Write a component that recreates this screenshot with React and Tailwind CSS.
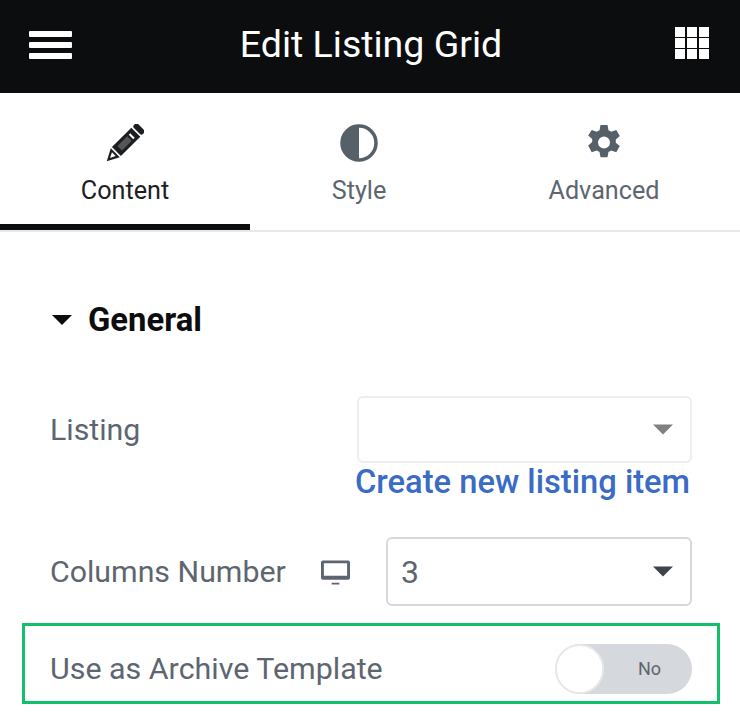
const Caret = ({ className }) => (
  <svg viewBox="0 0 20 10" className={className} fill="currentColor">
    <path d="M0 0h20L10 10z" />
  </svg>
);

const tabs = [
  { label: "Content", width: "w-[250px]", active: true },
  { label: "Style", width: "w-[218px]" },
  { label: "Advanced", width: "w-[272px]" },
];

const TabIcon = ({ name }) => {
  if (name === "Content") {
    return (
      <svg viewBox="0 0 36 36" className="h-[38px] w-[38px] text-[#1c1e21]" fill="currentColor">
        <g transform="rotate(45 18 18)">
          <rect x="12" y="-3.500" width="12" height="5.500" rx="2" />
          <rect x="12" y="3.500" width="12" height="26" />
          <rect x="15" y="8" width="6" height="2" fill="#fff" />
          <rect x="15" y="12" width="6" height="13" fill="#fff" opacity="0.25" />
          <path d="M12 31h12L18 42.500z" />
          <path d="M15.500 33h5L18 38z" fill="#fff" />
        </g>
      </svg>
    );
  }
  if (name === "Style") {
    return (
      <svg viewBox="0 0 38 38" className="h-[38px] w-[38px] text-[#556068]">
        <circle cx="19" cy="19" r="17" fill="none" stroke="currentColor" strokeWidth="3.500" />
        <path d="M19 2a17 17 0 0 0 0 34z" fill="currentColor" />
      </svg>
    );
  }
  return (
    <svg viewBox="0 0 38 38" className="h-[38px] w-[38px] text-[#556068]" fill="currentColor">
      <path
        fillRule="evenodd"
        d="M15.500 1h7l1 5.200 2.800 1.600 5-1.800 3.500 6.100-4 3.400v3.200l4 3.400-3.500 6.100-5-1.800-2.800 1.600-1 5.200h-7l-1-5.200-2.800-1.600-5 1.800L3.200 21.500l4-3.400v-3.200l-4-3.400L6.700 6l5 1.800 2.800-1.600zM19 12.500a6 6 0 1 0 0 12 6 6 0 0 0 0-12z"
      />
    </svg>
  );
};

export default function App() {
  return (
    <div className="h-[718px] w-[740px] overflow-hidden bg-white font-['Roboto',sans-serif] text-[#5d6670]">
      <header className="flex h-[93px] items-center justify-between bg-[#0c0d0e] pb-[3px] pl-[29px] pr-[31px] text-white">
        <div className="flex w-[43px] flex-col gap-[5px]">
          <span className="h-[6px] rounded-[1px] bg-white"></span>
          <span className="h-[6px] rounded-[1px] bg-white"></span>
          <span className="h-[6px] rounded-[1px] bg-white"></span>
        </div>
        <h1 className="mr-[5px] text-[37.500px] font-normal leading-none">Edit Listing Grid</h1>
        <div className="-mt-[5px] grid w-[34px] grid-cols-3 gap-x-[2px] gap-y-[1px]">
          {Array.from({ length: 9 }).map((_, i) => (
            <span key={i} className="h-[10px] bg-white"></span>
          ))}
        </div>
      </header>

      <nav className="flex h-[139px] border-b-2 border-[#e6e8ea]">
        {tabs.map((tab) => (
          <div
            key={tab.label}
            className={`${tab.width} flex flex-col items-center pt-[31px] ${
              tab.active ? "border-b-[6px] border-[#0c0d0e] text-[#1c1e21]" : ""
            }`}
          >
            <TabIcon name={tab.label} />
            <span className="mt-[11px] text-[25.200px] leading-[36px]">{tab.label}</span>
          </div>
        ))}
      </nav>

      <main className="pl-[50px] pr-[48px]">
        <div className="mt-[70px] flex items-center text-[#0c0d0e]">
          <Caret className="ml-[2px] h-[10px] w-[20px]" />
          <h2 className="ml-[16px] text-[32.800px] font-bold leading-[36px]">General</h2>
        </div>

        <div className="mt-[58px] flex justify-between">
          <label className="pt-[16px] text-[30.300px] leading-[36px]">Listing</label>
          <div className="w-[335px]">
            <div className="flex h-[67px] items-center justify-end rounded-[6px] border-2 border-[#eceef0] pr-[17px]">
              <Caret className="h-[11px] w-[20px] text-[#808080]" />
            </div>
            <a className="-ml-[2px] mr-[2px] mt-[1px] block whitespace-nowrap text-right text-[32.700px] font-medium leading-[36px] text-[#3a6bc5]">
              Create new listing item
            </a>
          </div>
        </div>

        <div className="mt-[37px] flex items-center">
          <label className="w-[235px] whitespace-nowrap text-[30.300px] leading-[36px]">Columns Number</label>
          <svg viewBox="0 0 30 26" className="ml-[36px] h-[26px] w-[29px]" fill="currentColor">
            <path
              fillRule="evenodd"
              d="M2 1h26a2 2 0 0 1 2 2v16a2 2 0 0 1-2 2H2a2 2 0 0 1-2-2V3a2 2 0 0 1 2-2zm1 3v13h24V4zM11 24h8v2h-8z"
            />
          </svg>
          <div className="ml-[36px] flex h-[69px] w-[306px] items-center justify-between rounded-[6px] border-2 border-[#d5d8dc] pl-[13px] pr-[17px]">
            <span className="text-[32px] leading-none">3</span>
            <Caret className="h-[11px] w-[20px] text-[#3f444b]" />
          </div>
        </div>

        <div className="-ml-[28px] -mr-[28px] mt-[17px] flex h-[81px] items-center justify-between border-[3px] border-[#12bf6b] pl-[25px] pr-[25px] pt-[11px]">
          <label className="text-[30.400px] leading-[36px]">Use as Archive Template</label>
          <div className="flex h-[50px] w-[137px] items-center justify-between rounded-full bg-[#d5d8dc]">
            <span className="h-[50px] w-[49px] rounded-full border-2 border-[#e6e8ea] bg-white"></span>
            <span className="mr-[31px] text-[18px] leading-none">No</span>
          </div>
        </div>
      </main>
    </div>
  );
}
